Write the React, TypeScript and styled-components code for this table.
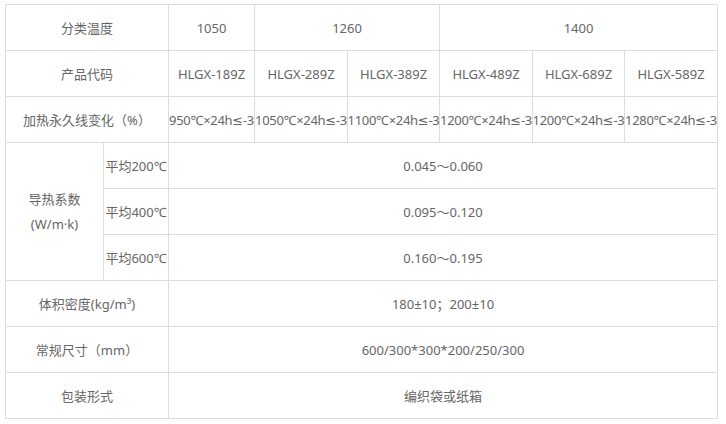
import React from 'react';
import styled, { createGlobalStyle } from 'styled-components';

const GlobalStyle = createGlobalStyle`
  body {
    margin: 0;
    background: #fff;
    font-family: "Noto Sans", "DejaVu Sans", "Noto Sans CJK SC", sans-serif;
  }
`

const Wrapper = styled.div`
  padding: 4px 0 0 5px;
`

const SpecGrid = styled.div`
  display: grid;
  grid-template-columns: 98px 65px 86px 93px 92px 93px 92px 93px;
  grid-auto-rows: 46px;
  width: fit-content;
  border-left: 1px solid #ddd;
  border-top: 1px solid #ddd;
`

const Cell = styled.div<{ $span?: number; $rows?: number; $tight?: boolean }>`
  grid-column: span ${props => props.$span || 1};
  grid-row: span ${props => props.$rows || 1};
  display: flex;
  align-items: center;
  justify-content: center;
  box-sizing: border-box;
  border-right: 1px solid #ddd;
  border-bottom: 1px solid #ddd;
  white-space: nowrap;
  font-size: 13px;
  letter-spacing: ${props => props.$tight ? '-0.3px' : 'normal'};
  color: #666;
  min-width: 0;
`

const Stack = styled.div`
  text-align: center;
  line-height: 25px;
`

const codes = ['HLGX-189Z', 'HLGX-289Z', 'HLGX-389Z', 'HLGX-489Z', 'HLGX-689Z', 'HLGX-589Z'];
const heatChange = ['950', '1050', '1100', '1200', '1200', '1280'];
const conductivity = [
  { label: '平均200℃', value: '0.045～0.060' },
  { label: '平均400℃', value: '0.095～0.120' },
  { label: '平均600℃', value: '0.160～0.195' },
];

function App() {
  return (
    <Wrapper>
      <GlobalStyle />
      <SpecGrid>
        <Cell $span={2}>分类温度</Cell>
        <Cell>1050</Cell>
        <Cell $span={2}>1260</Cell>
        <Cell $span={3}>1400</Cell>

        <Cell $span={2}>产品代码</Cell>
        {codes.map(c => <Cell key={c}>{c}</Cell>)}

        <Cell $span={2}>加热永久线变化（%）</Cell>
        {heatChange.map((t, i) => <Cell key={i} $tight>{t}℃×24h≤-3</Cell>)}

        <Cell $rows={3}>
          <Stack>导热系数<br />(W/m·k)</Stack>
        </Cell>
        {conductivity.map(row => (
          <React.Fragment key={row.label}>
            <Cell>{row.label}</Cell>
            <Cell $span={6}>{row.value}</Cell>
          </React.Fragment>
        ))}

        <Cell $span={2}>体积密度(kg/m³)</Cell>
        <Cell $span={6}>180±10；200±10</Cell>

        <Cell $span={2}>常规尺寸（mm）</Cell>
        <Cell $span={6}>600/300*300*200/250/300</Cell>

        <Cell $span={2}>包装形式</Cell>
        <Cell $span={6}>编织袋或纸箱</Cell>
      </SpecGrid>
    </Wrapper>
  )
}

export default App;
